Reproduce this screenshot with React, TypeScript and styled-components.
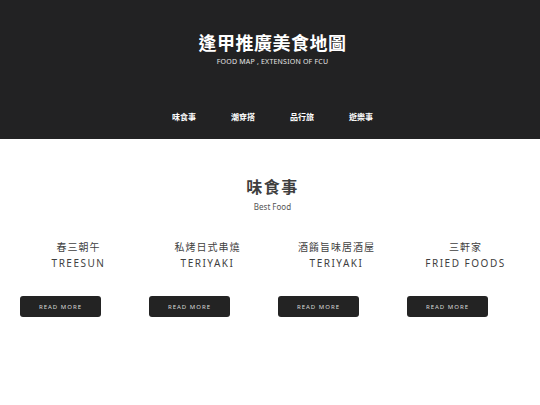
import styled, { createGlobalStyle } from 'styled-components'

const GlobalStyle = createGlobalStyle`
  body {
    margin: 0;
    background: #ffffff;
    font-family: 'Noto Sans', 'Noto Sans CJK TC', sans-serif;
  }
`

const Header = styled.header`
  height: 139px;
  padding-left: 5px;
  background: #222223;
  display: flex;
  flex-direction: column;
  align-items: center;
  color: #ffffff;
`

const Title = styled.h1`
  margin: 30px 0 0;
  font-family: 'Noto Sans CJK TC', sans-serif;
  font-weight: 700;
  font-size: 18px;
  line-height: 24px;
  letter-spacing: 0.5px;
`

const Subtitle = styled.p`
  margin: 3px 0 0;
  font-size: 7px;
  line-height: 10px;
  letter-spacing: 0.2px;
  color: #e6e6e6;
`

const Nav = styled.nav`
  margin-top: 44px;
  display: flex;
  gap: 33px;
`

const NavLink = styled.a`
  font-family: 'Noto Sans CJK TC', sans-serif;
  font-weight: 700;
  font-size: 8px;
  line-height: 12px;
  color: #ffffff;
  width: 26px;
  text-align: center;
`

const Section = styled.section`
  display: flex;
  flex-direction: column;
  align-items: center;
  padding-top: 36px;
`

const Heading = styled.div`
  padding-left: 5px;
  display: flex;
  flex-direction: column;
  align-items: center;
`

const SectionTitle = styled.h2`
  margin: 0;
  font-family: 'Noto Sans CJK TC', sans-serif;
  font-weight: 700;
  font-size: 16px;
  line-height: 22px;
  letter-spacing: 1.5px;
  color: #3f3f3f;
`

const SectionSub = styled.p`
  margin: 4px 0 0;
  font-size: 8px;
  line-height: 12px;
  color: #555555;
`

const Grid = styled.div`
  align-self: stretch;
  margin-top: 27px;
  padding: 0 10px 0 14px;
  display: grid;
  grid-template-columns: repeat(4, 129px);
`

const Card = styled.div`
  display: flex;
  flex-direction: column;
  align-items: center;
  padding: 0 6px;
`

const Name = styled.h3`
  margin: 0;
  font-family: 'Noto Sans CJK TC', sans-serif;
  font-weight: 400;
  font-size: 10px;
  line-height: 14px;
  letter-spacing: 1px;
  color: #3f3f3f;
`

const English = styled.p`
  margin: 2px 0 0;
  font-size: 10px;
  line-height: 14px;
  letter-spacing: 1.5px;
  color: #3f3f3f;
`

const Button = styled.button`
  align-self: flex-start;
  margin-top: 26px;
  width: 81px;
  height: 21px;
  border: none;
  border-radius: 3px;
  background: #232323;
  color: #d9d9d9;
  font-family: 'Noto Sans', sans-serif;
  font-size: 6px;
  letter-spacing: 1px;
  padding: 0;
`

const foods = [
  { name: '春三朝午', en: 'TREESUN' },
  { name: '私烤日式串燒', en: 'TERIYAKI' },
  { name: '酒餚旨味居酒屋', en: 'TERIYAKI' },
  { name: '三軒家', en: 'FRIED FOODS' }
]

export default function App() {
  return (
    <>
      <GlobalStyle />
      <Header>
        <Title>逢甲推廣美食地圖</Title>
        <Subtitle>FOOD MAP , EXTENSION OF FCU</Subtitle>
        <Nav>
          <NavLink>味食事</NavLink>
          <NavLink>潮穿搭</NavLink>
          <NavLink>品行旅</NavLink>
          <NavLink>遊樂事</NavLink>
        </Nav>
      </Header>
      <Section>
        <Heading>
          <SectionTitle>味食事</SectionTitle>
          <SectionSub>Best Food</SectionSub>
        </Heading>
        <Grid>
          {foods.map((f, i) => (
            <Card key={i}>
              <Name>{f.name}</Name>
              <English>{f.en}</English>
              <Button>READ MORE</Button>
            </Card>
          ))}
        </Grid>
      </Section>
    </>
  )
}
